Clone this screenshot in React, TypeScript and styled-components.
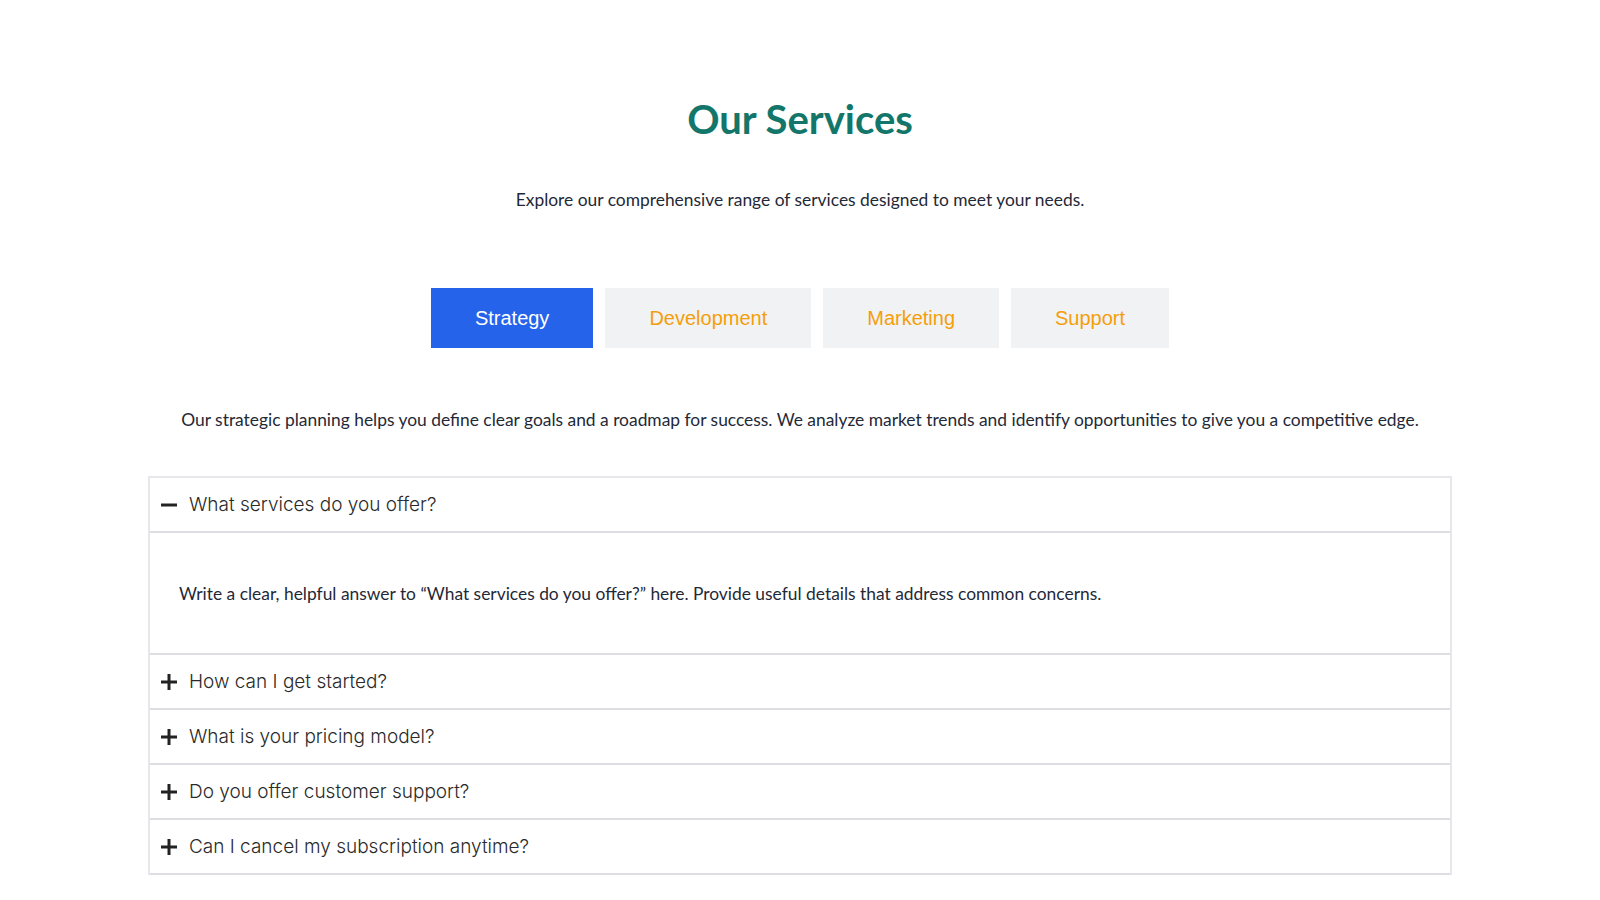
import React, { useState } from 'react';
import styled, { createGlobalStyle } from 'styled-components';

const GlobalStyle = createGlobalStyle`
  body {
    margin: 0;
    background: #fff;
    font-family: 'Lato', 'Noto Sans', sans-serif;
    color: #1f2937;
  }
`;

const Page = styled.main`
  padding: 92px 148px 40px;
  display: flex;
  flex-direction: column;
  align-items: center;
`;

const Title = styled.h1`
  margin: 0;
  font-size: 40px;
  font-weight: 700;
  color: #13766a;
  line-height: 54px;
`;

const Subtitle = styled.p`
  margin: 43px 0 0;
  font-size: 17.4px;
  color: #1f2937;
`;

const Tabs = styled.div`
  display: flex;
  gap: 12px;
  margin-top: 78px;
`;

const Tab = styled.button<{ $active?: boolean }>`
  height: 60px;
  padding: 0 44px;
  border: none;
  font-family: 'Liberation Sans', Arial, sans-serif;
  font-size: 20px;
  cursor: pointer;
  background: ${(p) => (p.$active ? '#2563eb' : '#f1f2f4')};
  color: ${(p) => (p.$active ? '#fff' : '#f59e0b')};
`;

const Description = styled.p`
  margin: 59px 0 0;
  font-size: 17.4px;
  line-height: 26px;
  text-align: center;
`;

const Accordion = styled.div`
  margin-top: 43px;
  width: 100%;
  border: 2px solid #e5e7eb;
  border-bottom: none;
  box-sizing: border-box;
`;

const Item = styled.div`
  border-bottom: 2px solid #dcdee2;
`;

const Header = styled.button`
  width: 100%;
  height: 53px;
  display: flex;
  align-items: center;
  gap: 11px;
  padding: 0 10px;
  border: none;
  background: #fff;
  font-family: 'Inter', 'Noto Sans', sans-serif;
  font-size: 19px;
  font-weight: 300;
  color: #2a2a2a;
  text-align: left;
  cursor: pointer;
`;

const Body = styled.div`
  border-top: 2px solid #dcdee2;
  padding: 0 29px;
  height: 122px;
  display: flex;
  align-items: center;
  font-size: 17.4px;
  color: #1f2937;
  box-sizing: border-box;
`;

const Icon = ({ open }: { open: boolean }) => (
  <svg width="18" height="18" viewBox="0 0 18 18" fill="none" stroke="#222" strokeWidth="3">
    <line x1="1" y1="9" x2="17" y2="9" />
    {!open && <line x1="9" y1="1" x2="9" y2="17" />}
  </svg>
);

const tabs = ['Strategy', 'Development', 'Marketing', 'Support'];

const questions = [
  'What services do you offer?',
  'How can I get started?',
  'What is your pricing model?',
  'Do you offer customer support?',
  'Can I cancel my subscription anytime?',
];

export default function App() {
  const [active, setActive] = useState(0);
  const [open, setOpen] = useState<number | null>(0);

  return (
    <>
      <GlobalStyle />
      <Page>
        <Title>Our Services</Title>
        <Subtitle>Explore our comprehensive range of services designed to meet your needs.</Subtitle>
        <Tabs>
          {tabs.map((t, i) => (
            <Tab key={t} $active={i === active} onClick={() => setActive(i)}>
              {t}
            </Tab>
          ))}
        </Tabs>
        <Description>
          Our strategic planning helps you define clear goals and a roadmap for success. We analyze market
          trends and identify opportunities to give you a competitive edge.
        </Description>
        <Accordion>
          {questions.map((q, i) => (
            <Item key={q}>
              <Header onClick={() => setOpen(open === i ? null : i)}>
                <Icon open={open === i} />
                {q}
              </Header>
              {open === i && (
                <Body>
                  Write a clear, helpful answer to “{q}” here. Provide useful details that address common concerns.
                </Body>
              )}
            </Item>
          ))}
        </Accordion>
      </Page>
    </>
  );
}
